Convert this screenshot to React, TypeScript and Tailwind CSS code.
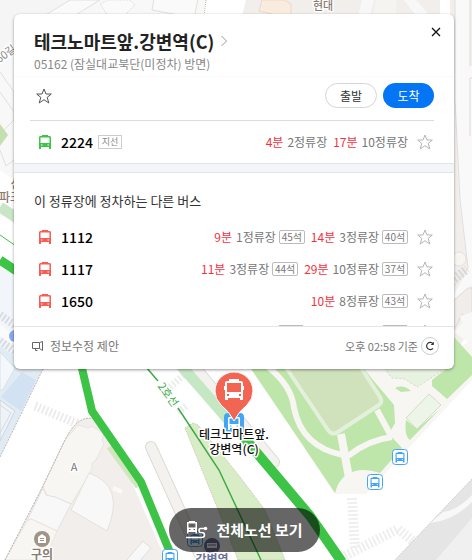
import { useState } from "react";

interface Arrival {
  minutes: string;
  stops: string;
  seats?: string;
}

interface Bus {
  number: string;
  arrivals: Arrival[];
}

const mainBus: Bus = {
  number: "2224",
  arrivals: [
    { minutes: "4분", stops: "2정류장" },
    { minutes: "17분", stops: "10정류장" },
  ],
};

const otherBuses: Bus[] = [
  {
    number: "1112",
    arrivals: [
      { minutes: "9분", stops: "1정류장", seats: "45석" },
      { minutes: "14분", stops: "3정류장", seats: "40석" },
    ],
  },
  {
    number: "1117",
    arrivals: [
      { minutes: "11분", stops: "3정류장", seats: "44석" },
      { minutes: "29분", stops: "10정류장", seats: "37석" },
    ],
  },
  {
    number: "1650",
    arrivals: [{ minutes: "10분", stops: "8정류장", seats: "43석" }],
  },
];

const BUS_PATH =
  "M3 0H9V1H11L12 2V14H10V12H2V14H0V2L1 1H3ZM1.5 2.5V8H10.5V2.5ZM2 9.5V10.5H3.5V9.5ZM8.5 9.5V10.5H10V9.5Z";

function BusIcon({ className }: { className: string }) {
  return (
    <svg viewBox="0 0 12 14" className={className} aria-hidden="true">
      <path d={BUS_PATH} fill="currentColor" fillRule="evenodd" />
    </svg>
  );
}

function StarButton({ label, className }: { label: string; className: string }) {
  const [on, setOn] = useState(false);

  return (
    <button
      type="button"
      aria-label={label}
      aria-pressed={on}
      onClick={() => setOn(!on)}
      className={className}
    >
      <svg viewBox="0 0 16 16" className="block w-full" aria-hidden="true">
        <path
          d="M8 1L10 6H15.3L11.2 9.4L12.8 15L8 11.7L3.2 15L4.8 9.4L.7 6H6Z"
          fill={on ? "currentColor" : "none"}
          stroke="currentColor"
          strokeWidth="1"
        />
      </svg>
    </button>
  );
}

function SeatTag({ children }: { children?: string }) {
  return (
    <span className="ml-[3px] flex h-3.5 w-[26px] items-center justify-center rounded-xs border border-[#bbb] text-[10px] leading-3 text-[#777]">
      {children}
    </span>
  );
}

function Arrivals({ bus }: { bus: Bus }) {
  return (
    <div className="flex items-center">
      <div className="flex gap-1.5 text-xs">
        {bus.arrivals.map((arrival) => (
          <div key={arrival.minutes} className="flex items-center">
            <span className="text-[#f2333f]">{arrival.minutes}</span>
            <span className="ml-1 text-[#777]">{arrival.stops}</span>
            {arrival.seats && <SeatTag>{arrival.seats}</SeatTag>}
          </div>
        ))}
      </div>
      <StarButton
        label={`${bus.number} 즐겨찾기`}
        className="mr-px ml-[9px] w-4 text-[#b5b5b5]"
      />
    </div>
  );
}

function MapStop({ x, y }: { x: number; y: number }) {
  return (
    <g transform={`translate(${x} ${y})`}>
      <rect x="-7.5" y="-7.5" width="15" height="15" rx="3" fill="#fff" stroke="#45a5f5" />
      <path d={BUS_PATH} transform="translate(-4.5 -5) scale(.75)" fill="#45a5f5" fillRule="evenodd" />
    </g>
  );
}

function CityMap() {
  return (
    <svg
      viewBox="0 0 472 560"
      preserveAspectRatio="xMinYMin slice"
      className="absolute inset-0 h-full w-full"
      aria-hidden="true"
    >
      <rect width="472" height="560" fill="#fff" />

      {/* north blocks */}
      <path d="M0 0H78L0 56Z" fill="#f5f5f5" />
      <path d="M0 60L100 0H206V20H14V180L0 170Z" fill="#f8f8f8" />
      <g fill="#fafafa" stroke="#e2dfdb">
        <path d="M44 16L70 0H100L74 16Z" />
        <path d="M100 4L108 0H130L135 5L124 16H108Z" strokeDasharray="2 1" />
        <path d="M154 -1L152 10L194 18L198 -1Z" />
        <path d="M0 72L14 92V120L0 134M0 92L14 112M0 150L6 166L14 160" fill="none" />
      </g>
      <path d="M206 0L202 16H240L247 0Z" fill="#fff" />
      <path d="M246 0L242 16H440V0Z" fill="#f1eeec" />
      <path d="M262 0L259 11L276 15H291V4L285 0Z" fill="#f9ecdf" stroke="#ecd9c6" />
      <path d="M362 0L358 16H370L374 0ZM404 0L416 16H430L416 0Z" fill="#f8f8f8" />
      <path d="M376 0L373 16H396V0Z" fill="#f6f4f1" />
      <path d="M206 0L204 16" stroke="#b9b3aa" strokeDasharray="1 1" />

      {/* east side */}
      <path d="M450 0H472V330L454 352Z" fill="#f1eeec" />
      <path d="M455 0H470V66H472V285L454 305V294L468 270L459 200L455 100Z" fill="#f9f9f9" />
      <path d="M455 0V100L460 200L468 268L454 286M470 0V66M472 78H470V136" fill="none" stroke="#e0dddb" />
      <circle cx="459" cy="259" r="7" fill="#f7f5f0" stroke="#e5e1dc" />
      <path d="M454 279L467 269" stroke="#d9d9d9" strokeWidth="9" strokeDasharray="2 2" />
      <path d="M454 300L468 288H472V318L462 314L454 330Z" fill="#f0edeb" stroke="#dedad7" />
      <path d="M454 332L462 323L460 316L472 312V345Z" fill="#f8f8f7" />

      {/* west side */}
      <path d="M0 124L8 135L0 146Z" fill="#c5e0b0" />
      <path d="M0 207L20 220" stroke="#c9e7c7" strokeWidth="11" />
      <path d="M0 235L16 246" stroke="#3dc446" />
      <path d="M0 266L40 292V372L0 456Z" fill="#f2f6fb" />
      <path d="M0 315L20 329M0 341L20 355" stroke="#d5dde3" strokeWidth="8" strokeDasharray="2 2" />
      <path d="M0 324L18 338V348L0 336Z" fill="#fafafa" />
      <path d="M0 346L14 356L43 368L0 456Z" fill="#e1ebf4" />
      <path d="M0 352L15 368L2 391L0 389Z" fill="#f4f8fc" stroke="#d8e0e9" />
      <path d="M22 372L36 380L21 411L1 397Z" fill="#d3e2f2" />
      <path d="M0 400L15 411L0 441Z" fill="#eef3f8" stroke="#cdd4dc" />
      <path d="M0 405L11 413L0 433" fill="none" stroke="#d3dae1" />
      <path d="M43 369L0 457" stroke="#b5b5b5" strokeDasharray="2 1" />
      <path d="M0 260L18 272" stroke="#3dc446" strokeWidth="9" />
      <circle cx="15" cy="336" r="6" fill="#86a8ee" />

      {/* south-west block */}
      <path d="M35 406L78 424" stroke="#ececec" strokeWidth="9" strokeDasharray="2 2" />
      <path d="M5 560L43 486L65 440Q78 414 94 419L106 424L166 560Z" fill="#f1eeec" />
      <path
        d="M78 425L88 428L92 426L104 434L102 441L104 444L96 460L92 463L92 468L89 475L71 504L55 497L48 497L45 491L43 486L65 440Z"
        fill="#f7f6f3"
        stroke="#e9e5e1"
      />
      <path d="M43 488L46 495L55 497L71 504L57 531L31 519L27 521Z" fill="#f8f8f8" stroke="#e4e1de" />
      <path d="M27 521L31 519L57 531L45 560H5Z" fill="#f7f6f3" stroke="#e9e5e1" />
      <path d="M89 473Q126 486 107 531L71 510Z" fill="#f8f8f8" stroke="#e4e1de" />
      <path d="M114 486L123 490L121 494L112 490Z" fill="#f9f9f9" />
      <path d="M125 562L143 541L151 548L139 562Z" fill="#f8f8f8" stroke="#e0dddb" />
      <path d="M109 447L138 487" stroke="#d2e6bd" strokeWidth="5" />
      <path d="M5 560L43 486L65 440Q78 414 94 419" fill="none" stroke="#b5b1ad" strokeDasharray="2 1" />
      <path d="M151 447L200 555" stroke="#dedbd6" strokeWidth="12" strokeLinecap="round" />
      <path d="M151 447L200 555" stroke="#f4f2ee" strokeWidth="10" strokeLinecap="round" />

      {/* centre */}
      <path
        d="M185 428L193 423L198 425L237 473L265 510L285 560H238L217 507Z"
        fill="#d8ecc5"
        stroke="#c2c8b4"
        strokeDasharray="1 1"
      />
      <path d="M170 387L184 375M178 412L186 406" stroke="#ececec" strokeWidth="7" strokeDasharray="2 2" />
      <path d="M192 364L274 462" stroke="#dedbd6" strokeWidth="12" strokeLinecap="round" />
      <path d="M192 364L274 462" stroke="#f4f2ee" strokeWidth="10" strokeLinecap="round" />
      <path d="M178 362L232 424" stroke="#c6e7c4" strokeWidth="11" />
      <path d="M146 367L158 381M178 408L219 470L261 560" fill="none" stroke="#3cab46" strokeWidth="1.5" />

      {/* park */}
      <path d="M249 366L335 494H366L472 380V340L454 350Z" fill="#f8f6f3" />
      <path
        d="M249 366H362L373 380L394 405L395 423L389 434L402 448L380 473Q360 466 346 475Q338 481 335 493L300 441Z"
        fill="#bee5aa"
      />
      <path d="M454 337L472 357V375L447 399L432 386V380L446 369Z" fill="#bee5aa" />
      <path d="M267 366Q292 386 294 408Q302 447 343 455" fill="none" stroke="#f8f6f3" strokeWidth="6" />
      <path d="M341 434L349 478" stroke="#f8f6f3" strokeWidth="8" />
      <path d="M348 456Q368 440 392 437" fill="none" stroke="#f8f6f3" strokeWidth="6" />
      <path d="M377 410L391 436" stroke="#f8f6f3" strokeWidth="6" />
      <path
        d="M285 366L328 430Q332 436 338 432L379 405Q383 402 380 397L360 366Z"
        fill="#d0e2bb"
        stroke="#e3f0dc"
        strokeWidth="4"
      />
      <path d="M383 367H448L417 387L405 379L392 378Z" fill="#e8f2e1" stroke="#cbdcc0" strokeDasharray="2 2" />
      <path d="M395 388Q403 384 411 391L401 392Z" fill="#bee5aa" />
      <path d="M406 420L417 429L440 409L410 440Q404 436 406 420Z" fill="#bee5aa" />
      <path d="M429 394L441 405L417 429L406 418Z" fill="#ecf5e7" stroke="#d0dfc7" />

      {/* south-east */}
      <path d="M352 498L355 548" stroke="#efefef" strokeWidth="10" strokeDasharray="2 2" />
      <path d="M345 556L398 529L422 548" fill="none" stroke="#efefef" strokeWidth="10" strokeDasharray="2 2" />
      <path d="M472 479L395 560H472Z" fill="#e5e5e5" />
      <path d="M430 523Q453 521 472 502V495Q458 510 443 512Z" fill="#f8f8f8" />
      <path d="M472 518L436 560H472Z" fill="#f0f0f0" />
      <path d="M472 479L395 560" stroke="#cfcfcf" strokeDasharray="2 1" />

      {/* routes */}
      <path d="M81 364L92 411L141 482L174 562" fill="none" stroke="#3dc446" strokeWidth="8" />
      <path d="M236 428L310 516L342 562" fill="none" stroke="#3dc446" strokeWidth="10" />

      <MapStop x={400} y={457} />
      <MapStop x={375} y={482} />
      <MapStop x={195} y={539} />
      <MapStop x={170} y={557} />

      <circle cx="42" cy="539" r="8" fill="#a09488" />
      <path d="M38 537L42 534L46 537V543H38Z" fill="#fff" />
      <path d="M40 538.5H44M40 540.5H44" stroke="#a09488" />
      <circle cx="212" cy="546" r="8" fill="#6f76a5" />
      <path d="M207 543H217V548H207Z" fill="#fff" />
      <path d="M208 545H216" stroke="#6f76a5" />

      <g stroke="#fff" strokeWidth="3" paintOrder="stroke" strokeLinejoin="round" textAnchor="middle">
        <text x="323" y="10" fontSize="11" fontWeight="500" fill="#8b7c70">현대</text>
        <text x="16" y="188" fontSize="12" fontWeight="500" fill="#8b7c70">신</text>
        <text x="10" y="202" fontSize="12" fontWeight="500" fill="#8b7c70">파크</text>
        <text x="74" y="471" fontSize="11" fill="#777">A</text>
        <text x="42" y="559" fontSize="12" fontWeight="700" fill="#8b7c70">구의</text>
        <text x="212" y="564" fontSize="12" fontWeight="700" fill="#6c7398">강변역</text>
        <text x="8" y="57" fontSize="11" fill="#888" transform="rotate(-36 8 57)">60길</text>
        <text x="165" y="397" fontSize="11" fill="#3cab46" transform="rotate(54 165 397)">2호선</text>
      </g>

      {/* selected stop */}
      <rect x="224" y="413" width="20" height="19" rx="4" fill="#45a5f5" />
      <path d={BUS_PATH} transform="translate(228 416)" fill="#fff" fillRule="evenodd" />
      <path
        d="M234 421Q229 411 221 405Q215 399 215 391A19 19 0 0 1 253 391Q253 399 247 405Q239 411 234 421Z"
        fill="#f26552"
        stroke="#fff"
      />
      <path
        d="M229 379H239V381H241Q243 381 243 383V386H244V390H243V400H240V398H228V400H225V390H224V386H225V383Q225 381 227 381H229ZM227 383V392H241V383ZM227 394V396H229V394ZM239 394V396H241V394Z"
        fill="#fff"
        fillRule="evenodd"
      />
      <g
        fontSize="12"
        fontWeight="500"
        fill="#111"
        stroke="#fff"
        strokeWidth="3"
        paintOrder="stroke"
        strokeLinejoin="round"
        textAnchor="middle"
      >
        <text x="234" y="439">테크노마트앞.</text>
        <text x="234" y="454">강변역(C)</text>
      </g>
    </svg>
  );
}

export default function App() {
  return (
    <main className="relative min-h-screen overflow-hidden pt-3.5 pr-[18px] pl-3.5 font-['Noto_Sans_CJK_KR',sans-serif]">
      <CityMap />

      <section className="relative rounded-md bg-white shadow-[0_1px_3px_rgba(0,0,0,0.4)]">
        <header className="relative border-b border-[#fafafa] px-5 pt-[15px]">
          <h1 className="text-lg leading-6 font-bold text-[#222]">
            <a href="#stop" className="flex items-center">
              테크노마트앞.강변역(C)
              <svg viewBox="0 0 8 12" className="ml-1.5 w-2" aria-hidden="true">
                <path d="M1.500 1L6.500 6L1.500 11" fill="none" stroke="#999" />
              </svg>
            </a>
          </h1>
          <p className="pt-px pb-0.5 text-xs leading-5 text-[#888]">
            05162 (잠실대교북단(미정차) 방면)
          </p>
          <button type="button" aria-label="닫기" className="absolute top-3.5 right-3.5 w-2">
            <svg viewBox="0 0 8 8" className="block overflow-visible" aria-hidden="true">
              <path d="M0 0L8 8M8 0L0 8" stroke="#111" strokeWidth="1.300" />
            </svg>
          </button>
        </header>

        <div className="mr-5 ml-4 flex items-center justify-between border-b border-[#ddd] pt-1.5 pb-3 pl-1.5">
          <StarButton label="정류장 즐겨찾기" className="w-4 text-[#555]" />
          <div className="flex gap-1.5 text-xs">
            <button
              type="button"
              className="h-[25px] w-[52px] rounded-full border border-[#d5d5d5] bg-white text-[#333]"
            >
              출발
            </button>
            <button type="button" className="h-[25px] w-[51px] rounded-full bg-[#0475f4] text-white">
              도착
            </button>
          </div>
        </div>

        <div className="flex h-[42px] items-center justify-between pr-5 pl-[25px]">
          <div className="flex items-center">
            <BusIcon className="w-3 text-[#3dc446]" />
            <strong className="ml-2.5 text-sm font-medium text-black">{mainBus.number}</strong>
            <span className="ml-[5px] flex h-3.5 w-6 items-center justify-center border border-[#ccc] text-[9px] leading-3 text-[#888]">
              지선
            </span>
          </div>
          <Arrivals bus={mainBus} />
        </div>

        <div className="h-2.5 border-y border-[#e1e6ee] bg-[#f3f5f9]" />

        <div className="max-h-[153px] overflow-hidden px-5">
          <h2 className="pt-[18px] pb-2.5 text-[13px] leading-5 text-[#333]">
            이 정류장에 정차하는 다른 버스
          </h2>
          <ul>
            {otherBuses.map((bus) => (
              <li key={bus.number} className="flex h-8 items-center justify-between pl-[5px]">
                <div className="flex items-center">
                  <BusIcon className="w-3 text-[#fa5b52]" />
                  <strong className="ml-2.5 text-sm font-medium text-black">{bus.number}</strong>
                </div>
                <Arrivals bus={bus} />
              </li>
            ))}
            {/* next row, mostly below the fold of the list */}
            <li className="flex h-[30px] items-center justify-end">
              <SeatTag />
              <div className="ml-[75px]">
                <SeatTag />
              </div>
              <StarButton label="즐겨찾기" className="mr-px ml-[9px] w-4 text-[#b5b5b5]" />
            </li>
          </ul>
        </div>

        <footer className="flex h-[43px] items-center justify-between border-t border-[#e5e5e5] pr-[15px] pb-1 pl-[18px] text-xs text-[#777]">
          <a href="#edit" className="flex items-center">
            <svg viewBox="0 0 11 11" className="mr-[7px] w-[11px]" aria-hidden="true">
              <path d="M.5 1.500H7.500V7.500H.5ZM7.500 1.500L10.500 .5V9.500L7.500 7.500M3.500 7.500V9.500H5.500" fill="none" stroke="#666" />
            </svg>
            정보수정 제안
          </a>
          <div className="flex items-center text-[11px]">
            오후 02:58 기준
            <button
              type="button"
              aria-label="새로고침"
              className="ml-[3px] flex size-[18px] items-center justify-center rounded-full border border-[#ccc]"
            >
              <svg viewBox="0 0 10 10" className="w-2.5" aria-hidden="true">
                <path d="M8 7.300A3.600 3.600 0 1 1 8 2.700" fill="none" stroke="#333" strokeWidth="1.200" />
                <path d="M8.800 .8V4H5.600Z" fill="#333" />
              </svg>
            </button>
          </div>
        </footer>
      </section>

      <div className="absolute inset-x-0 bottom-2 flex justify-center pl-[17px]">
        <button
          type="button"
          className="flex h-11 items-center rounded-full bg-black/60 px-[17px] text-[15px] font-bold text-white"
        >
          <svg viewBox="0 0 22 18" className="mr-2 w-[22px]" aria-hidden="true">
            <path
              d="M3 0H9V1H11V12.500H9.500V11H2.500V12.500H1V1H3ZM2.500 2.500V6.500H9.500V2.500ZM3 8V9H4.500V8ZM7.500 8V9H9V8Z"
              fill="#fff"
              fillRule="evenodd"
            />
            <path
              d="M0 16.500H15.500Q18.500 16.500 18.500 14T15.500 11.500H14.500Q13 11.500 13 9.500T14.500 7.500H18"
              fill="none"
              stroke="#fff"
              strokeWidth="1.500"
            />
            <circle cx="19.500" cy="7.500" r="1.800" fill="#fff" />
          </svg>
          전체노선 보기
        </button>
      </div>
    </main>
  );
}
